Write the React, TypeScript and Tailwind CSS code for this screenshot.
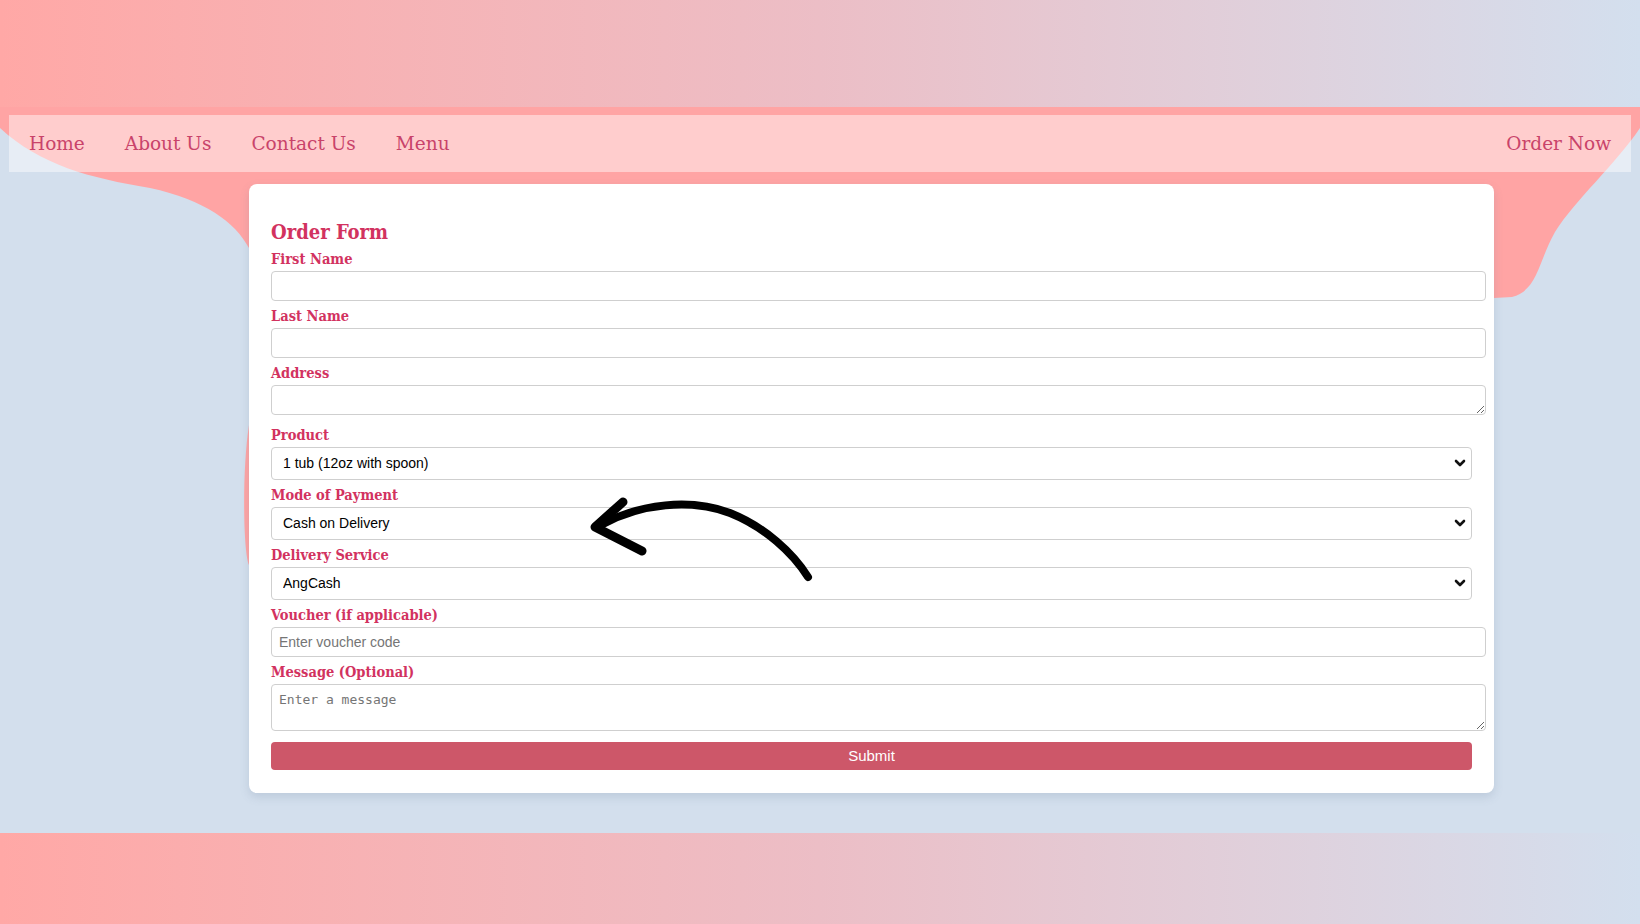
import React from 'react';

const navLinks = ['Home', 'About Us', 'Contact Us', 'Menu'];

const slab = { fontFamily: '"DejaVu Serif", serif' };

function Label({ children }: { children: React.ReactNode }) {
  return (
    <label
      style={slab}
      className="block text-[14.5px] leading-[18px] font-bold text-[#d2325f] mb-[3px] font-stretch-condensed"
    >
      {children}
    </label>
  );
}

function Select({ value, mb = 'mb-[6px]' }: { value: string; mb?: string }) {
  return (
    <div className={`relative w-[1201px] ${mb}`}>
      <select
        defaultValue={value}
        className="block w-full h-[33px] appearance-none rounded-[4px] border border-[#cfcfcf] bg-white pl-[11px] text-[14px] text-black font-['Liberation_Sans',Arial,sans-serif] outline-none"
      >
        <option>{value}</option>
      </select>
      {/* chevron */}
      <svg
        className="pointer-events-none absolute right-[6px] top-[11px]"
        width="12"
        height="10"
        viewBox="0 0 12 10"
      >
        <polyline points="2,3 6,7 10,3" fill="none" stroke="#111" strokeWidth="2.6" strokeLinecap="round" strokeLinejoin="round" />
      </svg>
    </div>
  );
}

export default function App() {
  return (
    <div className="relative w-[1640px] h-[924px] overflow-hidden bg-[#d3dfed]">
      {/* salmon blob behind nav and card */}
      <svg className="absolute left-0 top-0" width="1640" height="924" viewBox="0 0 1640 924">
        <path
          d="M0,100 H1640 V128 C1615,165 1575,200 1555,232 C1538,262 1538,290 1512,297 L1494,298 L1494,565 L249,565 C243,550 242,470 249,425 L249,248 C235,222 205,200 150,188 C90,178 40,165 0,128 Z"
          fill="#ffa4a4"
        />
      </svg>

      <div className="relative">
        {/* top band */}
        <div className="h-[107px] bg-gradient-to-r from-[#ffa8a6] via-[#ecbec6] to-[#d3dfee]" />

        {/* nav */}
        <nav
          style={slab}
          className="mt-[8px] mx-[9px] h-[57px] flex items-center justify-between bg-[rgba(255,255,255,0.45)] pl-[20px] pr-[20px] text-[18.5px] text-[#c9436a]"
        >
          <div className="flex items-center gap-[40px]">
            {navLinks.map((l) => (
              <a key={l} className="cursor-pointer">{l}</a>
            ))}
          </div>
          <a className="cursor-pointer">Order Now</a>
        </nav>

        {/* order form card */}
        <div className="mt-[12px] ml-[249px] w-[1245px] rounded-[8px] bg-white pl-[22px] pt-[36px] pb-[23px] shadow-[0_4px_10px_rgba(90,110,140,0.18)]">
          <h2 style={slab} className="text-[20px] leading-[24px] font-bold text-[#d2325f] mb-[6px] font-stretch-condensed">
            Order Form
          </h2>

          <Label>First Name</Label>
          <input className="block w-[1215px] h-[30px] mb-[6px] rounded-[4px] border border-[#cfcfcf] px-[7px] outline-none" />

          <Label>Last Name</Label>
          <input className="block w-[1215px] h-[30px] mb-[6px] rounded-[4px] border border-[#cfcfcf] px-[7px] outline-none" />

          <Label>Address</Label>
          <textarea className="block w-[1215px] h-[30px] mb-[11px] rounded-[4px] border border-[#cfcfcf] px-[7px] outline-none resize" />

          <Label>Product</Label>
          <Select value="1 tub (12oz with spoon)" />

          <Label>Mode of Payment</Label>
          <Select value="Cash on Delivery" />

          <Label>Delivery Service</Label>
          <Select value="AngCash" />

          <Label>Voucher (if applicable)</Label>
          <input
            placeholder="Enter voucher code"
            className="block w-[1215px] h-[30px] mb-[6px] rounded-[4px] border border-[#cfcfcf] px-[7px] text-[14px] font-['Liberation_Sans',Arial,sans-serif] placeholder:text-[#757575] outline-none"
          />

          <Label>Message (Optional)</Label>
          <textarea
            placeholder="Enter a message"
            className="block w-[1215px] h-[47px] mb-[11px] rounded-[4px] border border-[#cfcfcf] px-[7px] pt-[5px] text-[13px] font-['DejaVu_Sans_Mono',monospace] placeholder:text-[#757575] outline-none resize"
          />

          <button className="block w-[1201px] h-[28px] rounded-[4px] bg-[#cd5769] text-white text-[15px] font-['Liberation_Sans',Arial,sans-serif]">
            Submit
          </button>
        </div>

        {/* bottom band */}
        <div className="mt-[40px] h-[92px] bg-gradient-to-r from-[#ffa8a6] via-[#ecbec6] to-[#d3dfee]" />
      </div>

      {/* hand drawn arrow */}
      <svg className="pointer-events-none absolute left-0 top-0" width="1640" height="924" viewBox="0 0 1640 924">
        <path
          d="M603,524 C640,504 690,498 730,513 C765,527 793,553 808,577"
          fill="none"
          stroke="#000"
          strokeWidth="8"
          strokeLinecap="round"
        />
        <path
          d="M623,502 L595,527 L642,551"
          fill="none"
          stroke="#000"
          strokeWidth="9"
          strokeLinecap="round"
          strokeLinejoin="round"
        />
      </svg>
    </div>
  );
}
